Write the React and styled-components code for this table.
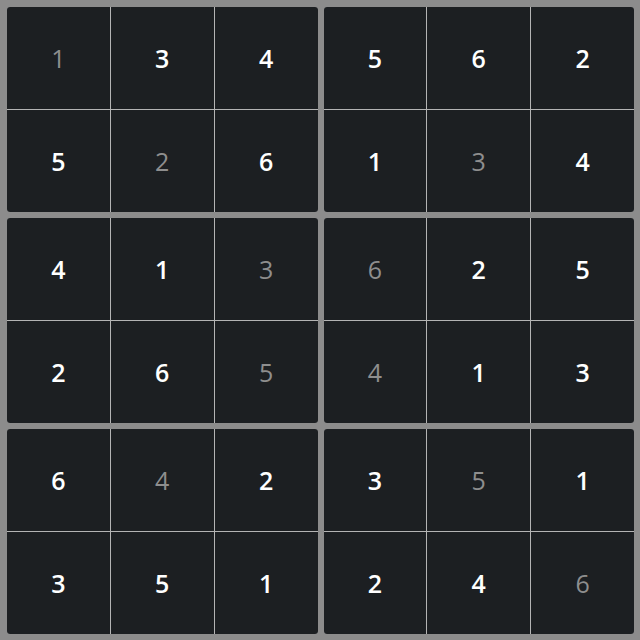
import React from 'react';
import styled, { createGlobalStyle } from 'styled-components';

const GlobalStyle = createGlobalStyle`
  html, body {
    margin: 0;
    padding: 0;
    background: #8c8c8c;
  }
`;

const Board = styled.div`
  width: 640px;
  height: 640px;
  box-sizing: border-box;
  padding: 7px 6px 6px 7px;
  background: #8c8c8c;
  display: grid;
  grid-template-columns: 1fr 1fr;
  grid-template-rows: 1fr 1fr 1fr;
  gap: 6px;
  font-family: 'Open Sans', 'Noto Sans', sans-serif;
`;

const Box = styled.div`
  display: grid;
  grid-template-columns: 1fr 1fr 1fr;
  grid-template-rows: 1fr 1fr;
  gap: 1px;
  background: #b4b4b4;
  border-radius: 3px;
  overflow: hidden;
`;

const Cell = styled.div`
  background: #1c1f22;
  display: flex;
  align-items: center;
  justify-content: center;
  font-size: 25px;
  font-weight: ${(p) => (p.$given ? 400 : 600)};
  color: ${(p) => (p.$given ? '#8e8e8e' : '#ffffff')};
`;

const grid = [
  [1, 3, 4, 5, 6, 2],
  [5, 2, 6, 1, 3, 4],
  [4, 1, 3, 6, 2, 5],
  [2, 6, 5, 4, 1, 3],
  [6, 4, 2, 3, 5, 1],
  [3, 5, 1, 2, 4, 6],
];

const given = new Set(['0-0', '1-1', '1-4', '2-2', '2-3', '3-2', '3-3', '4-1', '4-4', '5-5']);

export default function App() {
  const boxes = [];
  for (let br = 0; br < 3; br++) {
    for (let bc = 0; bc < 2; bc++) {
      const cells = [];
      for (let r = br * 2; r < br * 2 + 2; r++) {
        for (let c = bc * 3; c < bc * 3 + 3; c++) {
          cells.push(
            <Cell key={`${r}-${c}`} $given={given.has(`${r}-${c}`)}>
              {grid[r][c]}
            </Cell>
          );
        }
      }
      boxes.push(<Box key={`${br}-${bc}`}>{cells}</Box>);
    }
  }
  return (
    <>
      <GlobalStyle />
      <Board>{boxes}</Board>
    </>
  );
}
